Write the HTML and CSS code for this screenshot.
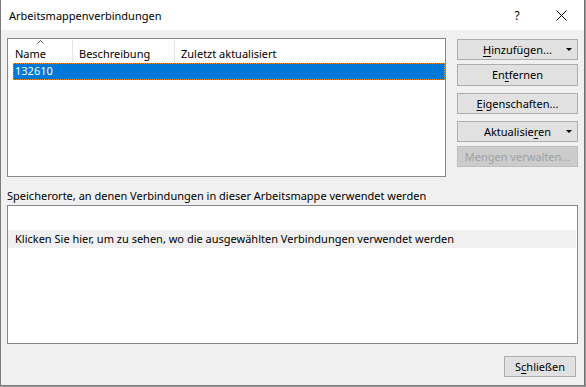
FILE: index.html
```html
<!DOCTYPE html>
<html lang="de">
<head>
<meta charset="utf-8">
<title>Arbeitsmappenverbindungen</title>
<link rel="stylesheet" href="styles.css">
</head>
<body>
<div class="window">
  <div class="titlebar">
    <span class="title">Arbeitsmappenverbindungen</span>
    <span class="help">?</span>
    <span class="close">
      <svg width="11" height="11" viewBox="0 0 11 11"><path d="M0.5 0.5 L10.5 10.5 M10.5 0.5 L0.5 10.5" stroke="#000" stroke-width="1" fill="none"/></svg>
    </span>
  </div>
  <div class="content">
    <div class="top">
      <div class="listview">
        <div class="header">
          <div class="col col-name">
            <svg class="caret" width="7" height="4" viewBox="0 0 7 4"><path d="M0.5 3.5 L3.5 0.5 L6.5 3.5" stroke="#555" stroke-width="1" fill="none"/></svg>
            Name
          </div>
          <div class="col col-desc">Beschreibung</div>
          <div class="col col-date">Zuletzt aktualisiert</div>
        </div>
        <div class="row selected"><span>132610</span></div>
      </div>
      <div class="buttons">
        <div class="btn b1"><span><u>H</u>inzufügen...</span><i class="arrow"></i></div>
        <div class="btn b2"><span>En<u>t</u>fernen</span></div>
        <div class="btn b3"><span><u>E</u>igenschaften...</span></div>
        <div class="btn b4"><span>Aktualisie<u>r</u>en</span><i class="arrow"></i></div>
        <div class="btn b5 disabled"><span>Mengen verwalten...</span></div>
      </div>
    </div>
    <div class="label">Speicherorte, an denen Verbindungen in dieser Arbeitsmappe verwendet werden</div>
    <div class="usage">
      <div class="usage-row">Klicken Sie hier, um zu sehen, wo die ausgewählten Verbindungen verwendet werden</div>
    </div>
    <div class="footer">
      <div class="btn close-btn"><span>S<u>c</u>hließen</span></div>
    </div>
  </div>
</div>
</body>
</html>
```

FILE: styles.css
```css
html, body {
  margin: 0;
  padding: 0;
}
body {
  background: #9a9a9a;
  width: 586px;
  height: 387px;
  overflow: hidden;
  font-family: "Noto Sans", "Open Sans", sans-serif;
  font-size: 11px;
  color: #000;
}
.window {
  width: 585px;
  height: 386px;
  box-sizing: border-box;
  border-left: 1px solid #7a7a7a;
  border-right: 1px solid #6e6e6e;
  border-bottom: 1px solid #7a7a7a;
  background: #f0f0f0;
  display: flex;
  flex-direction: column;
}
.titlebar {
  height: 30px;
  background: #fff;
  display: flex;
  align-items: center;
  padding-left: 8px;
  flex: none;
}
.title {
  flex: 1;
  font-size: 11px;
  margin-top: 1px;
}
.help {
  width: 20px;
  text-align: center;
  font-size: 12px;
  margin-right: 29px;
}
.close {
  width: 11px;
  height: 11px;
  display: flex;
  margin-right: 17px;
}
.content {
  padding: 8px 6px 0 6px;
  display: flex;
  flex-direction: column;
}
.top {
  display: flex;
  gap: 11px;
}
.listview {
  width: 439px;
  height: 139px;
  box-sizing: border-box;
  border: 1px solid #828790;
  background: #fff;
}
.header {
  display: flex;
  height: 24px;
}
.col {
  position: relative;
  box-sizing: border-box;
  padding: 6px 0 0 6px;
  line-height: 16px;
  white-space: nowrap;
}
.col-name {
  width: 65px;
  padding-left: 7px;
  border-right: 1px solid #e5e5e5;
  margin: 1px 0 0 0;
}
.col-desc {
  width: 102px;
  border-right: 1px solid #e5e5e5;
  margin-top: 1px;
}
.col-date {
  flex: 1;
  margin-top: 1px;
}
.caret {
  position: absolute;
  left: 29px;
  top: 0;
}
.row {
  height: 17px;
  line-height: 16px;
  margin-left: 5px;
  box-sizing: border-box;
}
.row.selected {
  background: #0078d7;
  color: #fff;
  outline: 1px dotted #f09020;
  outline-offset: -1px;
  padding-left: 2px;
}
.buttons {
  width: 121px;
  display: flex;
  flex-direction: column;
  padding-top: 1px;
}
.btn {
  position: relative;
  height: 21px;
  box-sizing: border-box;
  border: 1px solid #adadad;
  background: #e1e1e1;
  display: flex;
  align-items: center;
  justify-content: center;
  line-height: 16px;
}
.btn u {
  text-decoration: underline;
  text-underline-offset: 2px;
}
.b2 { margin-top: 4px; height: 22px; }
.b3 { margin-top: 7px; }
.b4 { margin-top: 7px; }
.b5 { margin-top: 4px; }
.btn.disabled {
  background: #cccccc;
  border-color: #bfbfbf;
  color: #a0a0a0;
}
.arrow {
  position: absolute;
  right: 5px;
  top: 8px;
  width: 0;
  height: 0;
  border-left: 3px solid transparent;
  border-right: 3px solid transparent;
  border-top: 3px solid #000;
}
.label {
  margin-top: 11px;
  height: 16px;
  line-height: 16px;
  white-space: nowrap;
}
.usage {
  margin-top: 1px;
  height: 139px;
  box-sizing: border-box;
  border: 1px solid #828790;
  background: #fff;
  padding-top: 24px;
}
.usage-row {
  height: 18px;
  line-height: 18px;
  background: #f0f0f0;
  padding-left: 7px;
  margin-right: 1px;
  white-space: nowrap;
}
.footer {
  display: flex;
  justify-content: flex-end;
  margin-top: 12px;
  padding-right: 2px;
}
.close-btn {
  width: 72px;
}
```
